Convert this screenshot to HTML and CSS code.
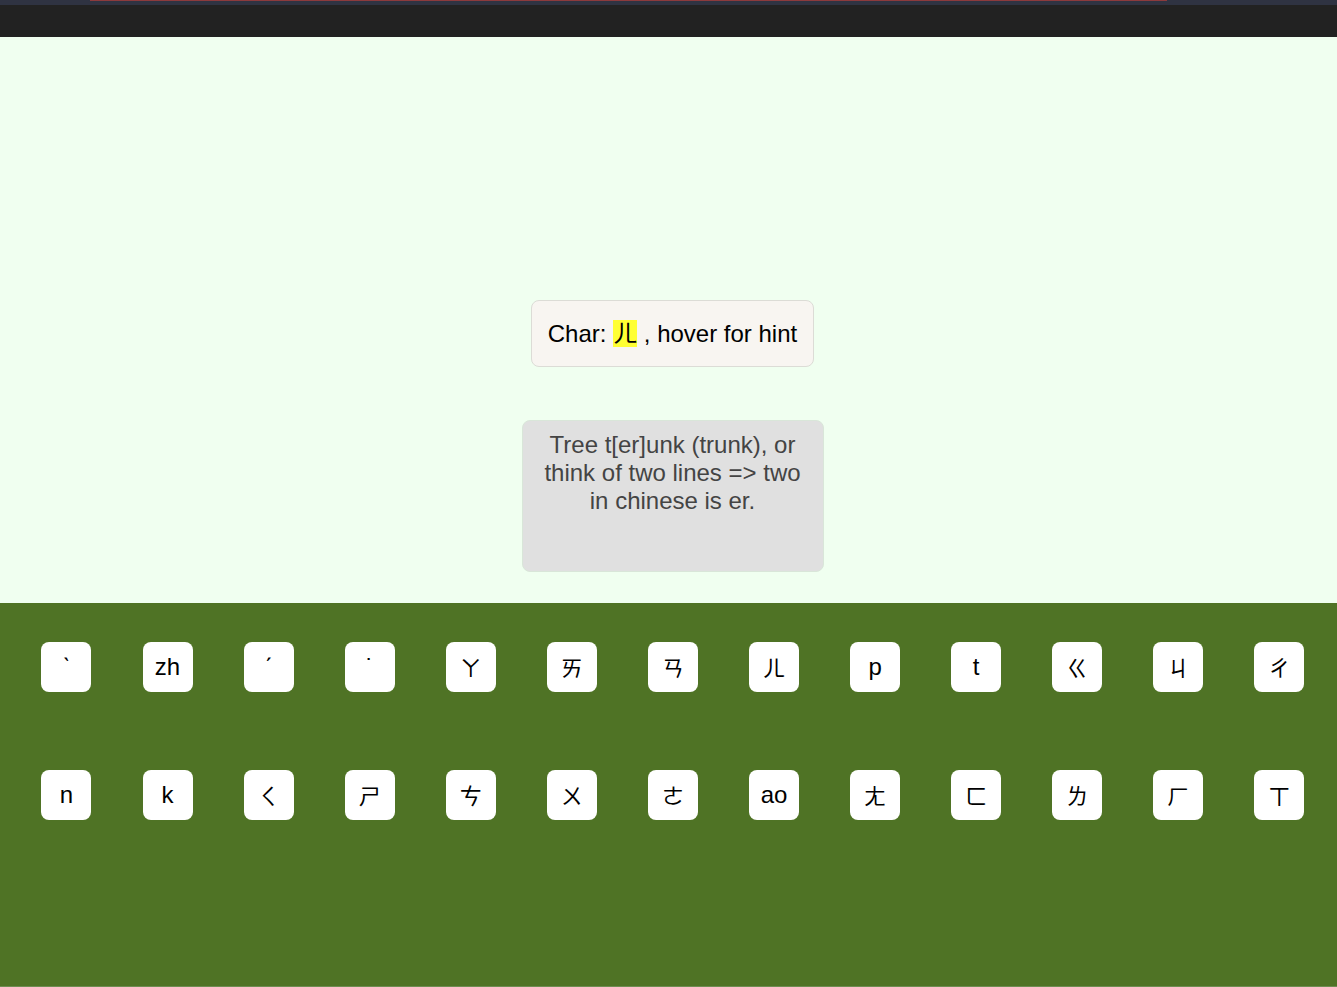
FILE: index.html
```html
<!DOCTYPE html>
<html lang="zh-Hant">
<head>
<meta charset="utf-8">
<title>Bopomofo</title>
<link rel="stylesheet" href="styles.css">
</head>
<body>
<header class="topbar">
  <div class="topstrip"><div class="progress"></div></div>
</header>
<main class="stage">
  <div class="charbox">Char: <span class="hl">ㄦ</span> , hover for hint</div>
  <div class="hint">Tree t[er]unk (trunk), or think of two lines =&gt; two in chinese is er.</div>
</main>
<section class="keyboard">
  <div class="row">
    <div class="key">ˋ</div>
    <div class="key">zh</div>
    <div class="key">ˊ</div>
    <div class="key">˙</div>
    <div class="key cjk">ㄚ</div>
    <div class="key cjk">ㄞ</div>
    <div class="key cjk">ㄢ</div>
    <div class="key cjk">ㄦ</div>
    <div class="key">p</div>
    <div class="key">t</div>
    <div class="key cjk">ㄍ</div>
    <div class="key cjk">ㄐ</div>
    <div class="key cjk">ㄔ</div>
  </div>
  <div class="row">
    <div class="key">n</div>
    <div class="key">k</div>
    <div class="key cjk">ㄑ</div>
    <div class="key cjk">ㄕ</div>
    <div class="key cjk">ㄘ</div>
    <div class="key cjk">ㄨ</div>
    <div class="key cjk">ㄜ</div>
    <div class="key">ao</div>
    <div class="key cjk">ㄤ</div>
    <div class="key cjk">ㄈ</div>
    <div class="key cjk">ㄌ</div>
    <div class="key cjk">ㄏ</div>
    <div class="key cjk">ㄒ</div>
  </div>
</section>
</body>
</html>
```

FILE: styles.css
```css
* { box-sizing: border-box; }
html, body { margin: 0; padding: 0; }
body {
  font-family: "Liberation Sans", "Noto Sans CJK TC", Arial, sans-serif;
  font-size: 24px;
  color: #000;
  background: #4f7325;
}
.topbar {
  height: 37px;
  background: #222;
}
.topstrip {
  height: 5px;
  background: #2f3342;
  padding-left: 90px;
}
.progress {
  width: 1077px;
  height: 1px;
  background: #8c3a3c;
}
.stage {
  height: 566px;
  background: #f0fff0;
  display: flex;
  flex-direction: column;
  align-items: center;
  padding-top: 263px;
  padding-left: 8px;
}
.charbox {
  background: #f8f5f1;
  border: 1px solid #dcdcd6;
  border-radius: 8px;
  padding: 18.5px 16px 19px 16px;
  line-height: 27.6px;
  white-space: nowrap;
}
.hl {
  background: #ffff33;
}
.hint {
  margin-top: 53px;
  width: 302px;
  height: 152px;
  background: #e0e0e0;
  border: 1px solid #d9e6d9;
  border-radius: 8px;
  padding: 10px 10px;
  color: #444;
  text-align: center;
}
.keyboard {
  height: 384px;
  background: #4f7325;
  border-bottom: 1px solid #6e8d52;
  padding-top: 39px;
  padding-left: 41.45px;
  display: flex;
  flex-direction: column;
  gap: 78px;
}
.row {
  display: grid;
  grid-template-columns: repeat(13, 50px);
  column-gap: 51.08px;
}
.key {
  width: 50px;
  height: 50px;
  background: #fff;
  border-radius: 8px;
  display: flex;
  align-items: center;
  justify-content: center;
  font-size: 24px;
  line-height: 1;
}
.key.cjk {
  font-family: "Noto Sans CJK TC", "Liberation Sans", sans-serif;
  font-size: 22px;
  padding-bottom: 3px;
}
```
